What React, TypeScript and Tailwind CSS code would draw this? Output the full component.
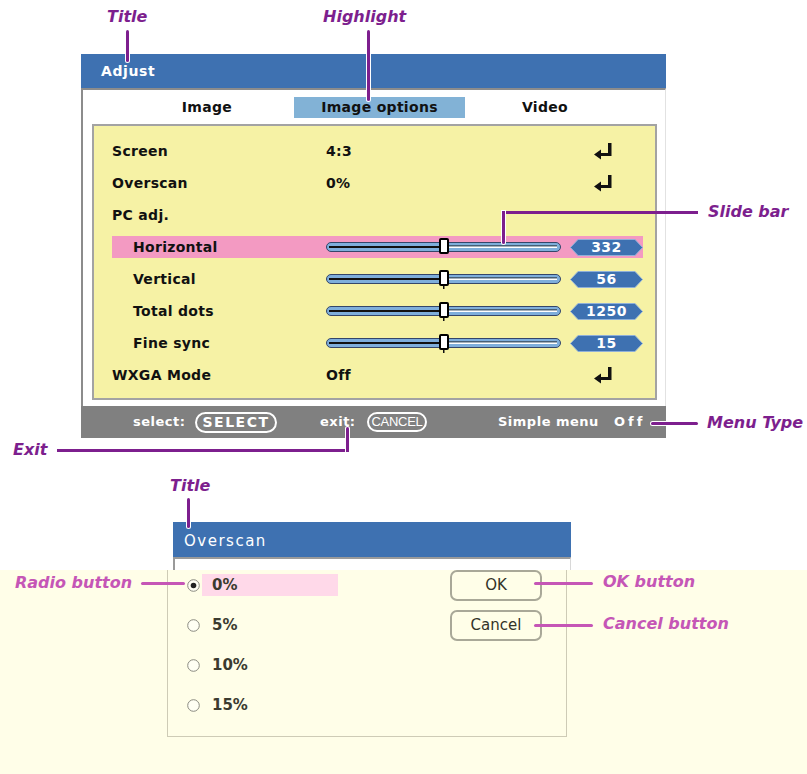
import React from "react";

type Row = {
  label: string;
  value?: string;
  enter?: boolean;
  sub?: boolean;
  slider?: string;
  active?: boolean;
};

const rows: Row[] = [
  { label: "Screen", value: "4:3", enter: true },
  { label: "Overscan", value: "0%", enter: true },
  { label: "PC adj." },
  { label: "Horizontal", sub: true, slider: "332", active: true },
  { label: "Vertical", sub: true, slider: "56" },
  { label: "Total dots", sub: true, slider: "1250" },
  { label: "Fine sync", sub: true, slider: "15" },
  { label: "WXGA Mode", value: "Off", enter: true },
];

const options = ["0%", "5%", "10%", "15%"];

const EnterIcon = () => (
  <svg width="20" height="17" viewBox="0 0 20 17">
    <path d="M15 0h3.5v13H8v3.5L1 11.5 8 6.5V10h7z" fill="#111" />
  </svg>
);

const Slider = ({ tick }: { tick: boolean }) => (
  <svg width="235" height="20" viewBox="0 0 235 20">
    <rect x="0.5" y="5.5" width="234" height="9" rx="4.5" fill="#7eaedb" stroke="#34466a" />
    <rect x="3" y="9" width="115" height="2" fill="#111" />
    <rect x="118" y="8.5" width="113" height="1" fill="#111" />
    <rect x="118" y="9.5" width="113" height="1.5" fill="#fff" />
    {tick && <rect x="117" y="16" width="1.5" height="4" fill="#111" />}
    <rect x="114" y="2" width="8" height="14" rx="1" fill="#fff" stroke="#000" strokeWidth="2" />
  </svg>
);

const Badge = ({ value }: { value: string }) => (
  <div className="relative w-[73px] h-[17px] flex items-center justify-center">
    <svg className="absolute inset-0" width="73" height="17" viewBox="0 0 73 17">
      <path d="M0.5 8.5 L8 0.5 H65 L72.5 8.5 L65 16.5 H8 Z" fill="#3e71b1" stroke="#8fb0d8" />
    </svg>
    <span className="relative text-white text-[14px] font-bold tracking-[0.5px] leading-none">{value}</span>
  </div>
);

const Radio = ({ checked }: { checked: boolean }) => (
  <svg width="13" height="13" viewBox="0 0 13 13">
    <circle cx="6.5" cy="6.5" r="5.8" fill="#fffff4" stroke="#8a8a80" strokeWidth="1" />
    {checked && <circle cx="6.5" cy="6.5" r="2.8" fill="#222" />}
  </svg>
);

export default function App() {
  return (
    <div className="relative w-[807px] h-[774px] bg-white overflow-hidden font-['DejaVu_Sans',sans-serif] text-[#111]">
      {/* main menu window */}
      <div className="pt-[54px] pl-[81px]">
        <div className="w-[585px]">
          <div className="h-[34px] bg-[#3e71b1] flex items-center pl-[20px] text-white text-[14px] font-bold tracking-[0.6px]">
            Adjust
          </div>
          <div className="border-t-2 border-l-2 border-[#8c8c8c] border-r border-r-[#e2e2e2] bg-white">
            <div className="flex pt-[7px] text-[14px] font-bold tracking-[0.3px]">
              <div className="ml-[49px] w-[150px] h-[21px] flex items-center justify-center">Image</div>
              <div className="ml-[12px] w-[171px] h-[21px] flex items-center justify-center bg-[#82b2d6]">Image options</div>
              <div className="ml-[5px] w-[150px] h-[21px] flex items-center justify-center">Video</div>
            </div>
            <div className="mt-[6px] ml-[9px] w-[565px] border-2 border-[#a3a3a3] bg-[#f6f2a5] pt-[9px] pb-[7px]">
              {rows.map((r) => (
                <div key={r.label} className="h-[32px] flex items-center">
                  <div
                    className={`ml-[18px] w-[531px] h-[22px] grid grid-cols-[214px_1fr] items-center text-[14px] font-bold tracking-[0.3px] ${
                      r.active ? "bg-[#f39ac2]" : ""
                    }`}
                  >
                    <span className={r.sub ? "pl-[21px]" : ""}>{r.label}</span>
                    {r.slider ? (
                      <div className="flex items-center justify-between">
                        <Slider tick={!r.active} />
                        <Badge value={r.slider} />
                      </div>
                    ) : (
                      <div className="flex items-center justify-between pr-[30px]">
                        <span>{r.value}</span>
                        {r.enter && <EnterIcon />}
                      </div>
                    )}
                  </div>
                </div>
              ))}
            </div>
            <div className="h-[6px]" />
          </div>
          <div className="h-[32px] bg-[#808080] flex items-center text-white text-[13px] font-bold tracking-[0.5px]">
            <span className="ml-[52px] w-[62px]">select:</span>
            <span className="w-[82px] h-[21px] rounded-full border-2 border-white flex items-center justify-center text-[14px] tracking-[1.5px]">
              SELECT
            </span>
            <span className="ml-[43px] w-[47px]">exit:</span>
            <span className="w-[60px] h-[20px] rounded-full border-2 border-white flex items-center justify-center font-['Liberation_Sans',sans-serif] font-normal text-[13px] tracking-[-0.3px]">
              CANCEL
            </span>
            <span className="ml-[71px] w-[116px]">Simple menu</span>
            <span className="tracking-[3px]">Off</span>
          </div>
        </div>
      </div>

      {/* overscan dialog */}
      <div className="mt-[84px] ml-[173px] w-[398px] h-[35px] bg-[#3e71b1] flex items-center pl-[11px] pt-[3px] text-white text-[15px] tracking-[1.5px]">
        Overscan
      </div>
      <div className="ml-[173px] w-[398px] h-[13px] bg-white border-t-2 border-l-2 border-[#9a9a9a] border-r border-r-[#d8d8d8]" />
      <div className="h-[204px] bg-[#fffee8]">
        <div className="ml-[167px] w-[400px] h-[167px] border-l border-r border-b border-[#cecbb6] flex">
          <div className="ml-[19px] w-[263px] pt-[4px] flex flex-col gap-[18px]">
            {options.map((o, i) => (
              <div key={o} className="h-[22px] flex items-center">
                <Radio checked={i === 0} />
                <div
                  className={`ml-[2px] w-[136px] h-[22px] flex items-center pl-[10px] text-[15px] font-bold text-[#3b3b30] ${
                    i === 0 ? "bg-[#ffd9e9]" : ""
                  }`}
                >
                  {o}
                </div>
              </div>
            ))}
          </div>
          <div className="w-[92px] flex flex-col gap-[9px]">
            <div className="h-[31px] rounded-[7px] border-2 border-[#a9a898] flex items-center justify-center text-[15px] text-[#333328] font-medium">
              OK
            </div>
            <div className="h-[31px] rounded-[7px] border-2 border-[#a9a898] flex items-center justify-center text-[15px] text-[#333328] font-medium">
              Cancel
            </div>
          </div>
        </div>
      </div>

      {/* annotations */}
      <div className="absolute left-[107px] top-[8px] text-[16px] leading-[18px] font-bold italic text-[#7d1f8e]">Title</div>
      <div className="absolute left-[126px] top-[30px] w-[3px] h-[32px] bg-[#7d1f8e] rounded-full ring-1 ring-white" />

      <div className="absolute left-[323px] top-[8px] text-[16px] leading-[18px] font-bold italic text-[#7d1f8e]">Highlight</div>
      <div className="absolute left-[367px] top-[30px] w-[3px] h-[71px] bg-[#7d1f8e] rounded-full ring-1 ring-white" />

      <div className="absolute left-[708px] top-[203px] text-[16px] leading-[18px] font-bold italic text-[#7d1f8e]">Slide bar</div>
      <div className="absolute left-[503px] top-[211px] w-[195px] h-[3px] bg-[#7d1f8e]" />
      <div className="absolute left-[502px] top-[211px] w-[3px] h-[33px] bg-[#7d1f8e] rounded-b-full ring-1 ring-white" />

      <div className="absolute left-[707px] top-[414px] text-[16px] leading-[18px] font-bold italic text-[#7d1f8e]">Menu Type</div>
      <div className="absolute left-[651px] top-[422px] w-[47px] h-[3px] bg-[#7d1f8e] rounded-full ring-1 ring-white" />

      <div className="absolute left-[13px] top-[441px] text-[16px] leading-[18px] font-bold italic text-[#7d1f8e]">Exit</div>
      <div className="absolute left-[57px] top-[449px] w-[292px] h-[3px] bg-[#7d1f8e]" />
      <div className="absolute left-[346px] top-[427px] w-[3px] h-[25px] bg-[#7d1f8e] rounded-t-full ring-1 ring-white" />

      <div className="absolute left-[170px] top-[477px] text-[16px] leading-[18px] font-bold italic text-[#7d1f8e]">Title</div>
      <div className="absolute left-[187px] top-[498px] w-[3px] h-[30px] bg-[#7d1f8e] rounded-full ring-1 ring-white" />

      <div className="absolute left-[15px] top-[574px] text-[16px] leading-[18px] font-bold italic text-[#c556b6]">Radio button</div>
      <div className="absolute left-[141px] top-[582px] w-[44px] h-[3px] bg-[#c556b6] rounded-full" />

      <div className="absolute left-[603px] top-[573px] text-[16px] leading-[18px] font-bold italic text-[#c556b6]">OK button</div>
      <div className="absolute left-[534px] top-[582px] w-[59px] h-[3px] bg-[#c556b6] rounded-full" />

      <div className="absolute left-[603px] top-[615px] text-[16px] leading-[18px] font-bold italic text-[#c556b6]">Cancel button</div>
      <div className="absolute left-[534px] top-[624px] w-[59px] h-[3px] bg-[#c556b6] rounded-full" />
    </div>
  );
}
